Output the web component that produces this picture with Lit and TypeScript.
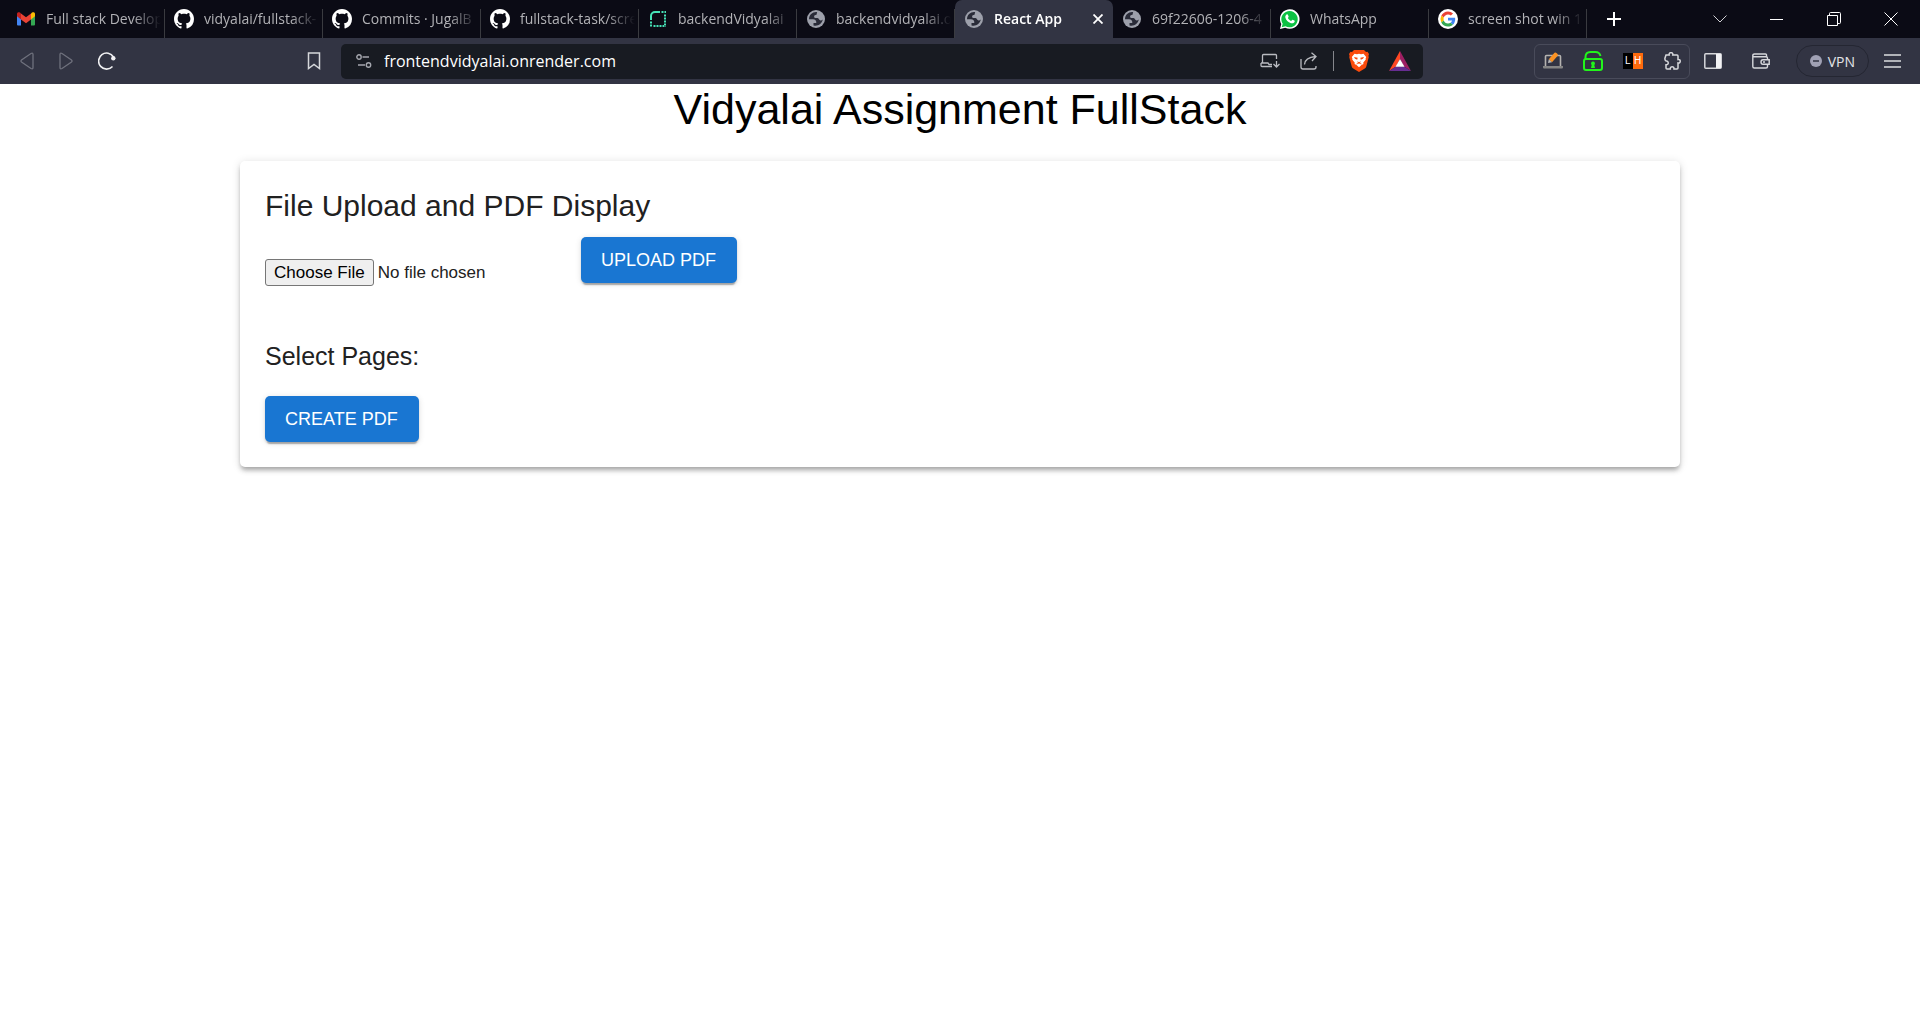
import { LitElement, html, css, svg } from "lit";
import { customElement, property } from "lit/decorators.js";

const icon = (w: number, h: number, body: unknown) =>
  html`<svg width=${w} height=${h} viewBox="0 0 ${w} ${h}" fill="none" aria-hidden="true">${body}</svg>`;

const gmail = icon(18, 14, svg`
  <path d="M0 2v10.5C0 13.300.6 13.500 1.200 13.500H4V6.500Z" fill="#4285f4"/>
  <path d="M18 2v10.500c0 .8-.6 1-1.200 1H14V6.500Z" fill="#34a853"/>
  <path d="M0 1.800C0 .2 1.700-.3 3 .6l1 .8v6L0 4.300Z" fill="#c5221f"/>
  <path d="M18 1.800C18 .2 16.300-.3 15 .6l-1 .8v6l4-3.100Z" fill="#fbbc04"/>
  <path d="M4 1.400 9 5.200l5-3.800v6l-5 3.800-5-3.800Z" fill="#ea4335"/>`);

const github = html`<svg width="20" height="20" viewBox="0 0 16 16" aria-hidden="true"><path fill="#fff" d="M8 0C3.58 0 0 3.58 0 8c0 3.54 2.29 6.53 5.47 7.59.4.07.55-.17.55-.38 0-.19-.01-.82-.01-1.49-2.01.37-2.53-.49-2.69-.94-.09-.23-.48-.94-.82-1.13-.28-.15-.68-.52-.01-.53.63-.01 1.08.58 1.23.82.72 1.21 1.87.87 2.33.66.07-.52.28-.87.51-1.07-1.78-.2-3.64-.89-3.64-3.95 0-.87.31-1.59.82-2.15-.08-.2-.36-1.02.08-2.12 0 0 .67-.21 2.2.82.64-.18 1.32-.27 2-.27s1.36.09 2 .27c1.53-1.04 2.2-.82 2.2-.82.44 1.1.16 1.92.08 2.12.51.56.82 1.27.82 2.15 0 3.07-1.87 3.75-3.65 3.95.29.25.54.73.54 1.48 0 1.07-.01 1.93-.01 2.2 0 .21.15.46.55.38A8.01 8.01 0 0 0 16 8c0-4.42-3.58-8-8-8Z"/></svg>`;

const render = icon(16, 16, svg`
  <path d="M1 9V5a4 4 0 0 1 4-4h5" stroke="#46e3b7" stroke-width="2"/>
  <path d="M11.500 1H16M15 3.500V16M1 10.500V16M3.500 15H14" stroke="#46e3b7" stroke-width="2" stroke-dasharray="2 1"/>`);

const globe = icon(18, 18, svg`
  <circle cx="9" cy="9" r="9" fill="#9da0ab"/>
  <path d="M2 9.300h3.900c2.400 0 3.500 1.200 3.400 3.700H6.500v2.400c4 1.300 8.500-1.400 9.300-5.800-.7.800-1.600 1-2.700.6-1.200-.4-1.300-2-2.700-2.200-1.500-.2-3.200.4-3.300-1.300-.1-1.500 1.400-1.300 2.200-1.900.8-.5.200-1.400.900-2.600C6 1.500 2 4.800 2 9.300Z" fill="#292b38"/>`);

const whatsapp = icon(20, 20, svg`
  <path d="M0 20 1.300 15A9.800 9.800 0 1 1 5.200 18.700Z" fill="#fff"/>
  <path d="m1.700 18.300 1-3.600A8.200 8.200 0 1 1 5.500 17.300Z" fill="#0dc143"/>
  <path d="M6.500 5.600c.5-.5 1.100-.4 1.400.2l.7 1.600c.2.500-.6 1.100-.7 1.500.7 1.400 1.800 2.400 3.200 3 .5-.1 1-1.200 1.500-1.100l1.700.8c.6.3.5.8.2 1.500-.6 1.200-2.200 1.500-3.500 1.100C8 13.200 6 11.100 5.400 8.700c-.3-1.200.2-2.300 1.100-3.100Z" fill="#fff"/>`);

const google = html`<svg width="20" height="20" viewBox="0 0 40 40" aria-hidden="true"><circle cx="20" cy="20" r="20" fill="#fff"/>
  <g transform="translate(5 5) scale(.625)">
  <path fill="#ea4335" d="M24 9.500c3.500 0 6.700 1.200 9.200 3.600l6.900-6.900C35.900 2.400 30.500 0 24 0 14.600 0 6.500 5.400 2.600 13.200l8 6.200C12.400 13.700 17.700 9.500 24 9.500Z"/>
  <path fill="#4285f4" d="M47 24.600c0-1.600-.2-3.100-.4-4.600H24v9h12.900c-.6 3-2.200 5.500-4.700 7.200l7.700 6C44.400 38 47 31.800 47 24.600Z"/>
  <path fill="#fbbc05" d="M10.500 28.600a14.500 14.500 0 0 1 0-9.200l-8-6.200a24 24 0 0 0 0 21.600Z"/>
  <path fill="#34a853" d="M24 48c6.500 0 11.900-2.100 15.900-5.800l-7.700-6c-2.200 1.400-4.900 2.300-8.200 2.300-6.300 0-11.600-4.200-13.500-9.900l-8 6.200C6.500 42.600 14.600 48 24 48Z"/></g></svg>`;

const plus = icon(14, 14, svg`<path d="M7 0v14M0 7h14" stroke="#fff" stroke-width="2"/>`);
const chevron = icon(14, 8, svg`<path d="m.5.5 6.500 6.500L13.500.5" stroke="#d0d0d4"/>`);
const minimize = icon(14, 14, svg`<path d="M0 7.500h13" stroke="#fff"/>`);
const restore = icon(14, 14, svg`<path d="M.5 3.500h10v10H.5zM2.500 3.500v-2q0-1 1-1h9q1 0 1 1v9q0 1-1 1h-2" stroke="#fff"/>`);
const closeWindow = icon(14, 14, svg`<path d="m.5.5 13 13m0-13-13 13" stroke="#fff"/>`);
const closeTab = icon(10, 10, svg`<path d="m.5.5 9 9m0-9-9 9" stroke="#fff" stroke-width="1.800"/>`);

const back = icon(14, 18, svg`<path d="M1.500 8q-1 1 0 2l9.500 6.500q2 1 2-1v-13q0-2-2-1Z" stroke="#6f717d" stroke-width="1.300"/>`);
const forward = icon(14, 18, svg`<path d="M12.500 8q1 1 0 2L3 16.500q-2 1-2-1v-13q0-2 2-1Z" stroke="#6f717d" stroke-width="1.300"/>`);
const reload = icon(18, 18, svg`<path d="M15.500 5A8 8 0 1 0 14.500 14.500" stroke="#f0f0f2" stroke-width="1.600"/><circle cx="15.300" cy="6.300" r="2.200" fill="#f0f0f2"/>`);
const bookmark = icon(14, 18, svg`<path d="M1.500 1h11v15.500L7 12.500l-5.500 4Z" stroke="#d6d7db" stroke-width="1.500"/>`);
const siteSettings = icon(16, 14, svg`<g stroke="#a5a7ae" stroke-width="1.400"><circle cx="3" cy="3" r="2.200"/><path d="M6.500 3H13M2 11h7"/><circle cx="12.500" cy="11" r="2.200"/></g>`);
const install = icon(20, 16, svg`<g stroke="#b9bbc0" stroke-width="1.300"><path d="M16.500 6V2.500q0-1-1-1h-12q-1 0-1 1V10M1 10h7l1 1.500h3M1 10v2.500q0 1 1 1h10M16.500 8v5.500M13.500 11l3 3 3-3"/></g>`);
const share = icon(18, 18, svg`<g stroke="#b9bbc0" stroke-width="1.300"><path d="M1 7v8q0 2 2 2h11q2 0 2-2v-1M4.500 12.500Q5 5.500 15.500 4.500M11.500.7l4.500 3.800-4 4.500"/></g>`);
const brave = icon(20, 22, svg`
  <path d="M5 0h10l2 2 1.500-.3L20 4l-.6 2 .4 1-2.500 9.500q-.4 1.300-1.500 2L10 22l-5.800-3.500q-1.100-.7-1.500-2L.2 7l.4-1L0 4l1.500-2.300L3 2Z" fill="#fb4b0c"/>
  <path d="m5.500 3.700 2.500.6 2-.5 2 .5 2.500-.6L17.200 7l-.6 1.500.2 1-2.600 3.300.3 1.300-2 .9L10 17.300 7.500 15l-2-.9.300-1.300-2.600-3.300.2-1L2.800 7Z" fill="#fff"/>
  <path d="m5 7 3.700.7-.5 2L6 8.800ZM15 7l-3.700.7.5 2L14 8.800ZM8.200 11.200 10 12.300l1.800-1.100-.6 1.500-1.200.7-1.200-.7Z" fill="#fb4b0c"/>
  <path d="m7.500 14 2.500-1 2.500 1" stroke="#fb4b0c" stroke-width=".8"/>`);
const bat = icon(22, 20, svg`
  <path d="M11 0 0 20l7-4.500 4-7.500Z" fill="#ff4724"/>
  <path d="M11 0v8l4 7.500 7 4.500Z" fill="#9e1f63"/>
  <path d="M0 20h22l-7-4.500H7Z" fill="#662d91"/>
  <path d="m11 8-4.500 7.700h9Z" fill="#fff"/>`);
const notes = icon(20, 18, svg`
  <path d="M2.500 14V4.500q0-1 1-1h13q1 0 1 1V14" stroke="#b5b3b0" stroke-width="1.600"/>
  <path d="M0 14h20v1.500q0 1-1 1H1q-1 0-1-1Z" fill="#858585"/>
  <path d="m5.800 7.200 5.700-6.400q1-.8 2 .2l1 1q1 1 0 2L9 10.200Z" fill="#fb9324"/><path d="m5 11 .8-3.800L9 10.200Z" fill="#b9b9b9"/>`);
const lock = icon(20, 20, svg`
  <path d="M2.500 8V6q0-5 5-5h5q4 0 5 4" stroke="#22f51b" stroke-width="2"/>
  <rect x="1" y="8" width="18" height="11" rx="2" stroke="#22f51b" stroke-width="2"/>
  <path d="M10 10.500a2 2 0 0 1 1.300 3.500l.7 3H8l.7-3A2 2 0 0 1 10 10.500Z" fill="#22f51b"/>`);
const puzzle = icon(18, 18, svg`<path d="M3 3h3.200C5.500-.2 10.500-.2 9.800 3H14q1 0 1 1v3.500c3-.7 3 4.200 0 3.500V16q0 1-1 1h-3c.3-3-4-3-3.700 0H4q-1 0-1-1v-3.200c3 .4 3-4.200 0-3.800Q1.500 8 2 6Z" stroke="#d6d7db" stroke-width="1.500"/>`);
const sidebar = icon(18, 16, svg`<rect x=".8" y=".8" width="16.400" height="14.400" rx="1" stroke="#d6d7db" stroke-width="1.500"/><path d="M12 1h5v14h-5Z" fill="#f2f2f4"/>`);
const wallet = icon(18, 16, svg`<g stroke="#d6d7db" stroke-width="1.400"><path d="M14.500 3.500V2q0-1-1-1h-11Q.8 1 .8 2.500v11q0 1.500 1.500 1.500H14q1.500 0 1.500-1.500V5q0-1.300-1.500-1.300H2.300Q.8 3.700.8 2.500"/><path d="M17.200 6.800H11q-2 0-2 2.200t2 2.200h6.200Z" fill="#323443"/></g><circle cx="12" cy="9" r="1" fill="#d6d7db"/>`);
const vpnDot = icon(12, 12, svg`<circle cx="6" cy="6" r="6" fill="#a0a1b4"/><path d="M3 6h6" stroke="#323443" stroke-width="1.500"/>`);
const menu = icon(18, 14, svg`<path d="M0 1h17M0 7h17M0 13h17" stroke="#dcdde0" stroke-width="1.500"/>`);

interface Tab { title: string; icon: unknown; active?: boolean }

const tabs: Tab[] = [
  { title: "Full stack Develop", icon: gmail },
  { title: "vidyalai/fullstack-", icon: github },
  { title: "Commits · JugalB", icon: github },
  { title: "fullstack-task/scre", icon: github },
  { title: "backendVidyalai", icon: render },
  { title: "backendvidyalai.o", icon: globe },
  { title: "React App", icon: globe, active: true },
  { title: "69f22606-1206-4", icon: globe },
  { title: "WhatsApp", icon: whatsapp },
  { title: "screen shot win 1", icon: google },
];

const reset = css`
  * { box-sizing: border-box; }
  svg { display: block; flex: none; }
  button, input { font: inherit; color: inherit; }
  button { border: 0; background: none; padding: 0; margin: 0; }
`;

@customElement("browser-tab")
class BrowserTab extends LitElement {
  @property({ attribute: false }) tab!: Tab;
  static styles = [reset, css`
    :host { display: block; flex: 0 1 158px; min-width: 0; height: 38px; color: #b2b2b6; }
    .tab { display: flex; align-items: center; height: 100%; padding: 0 4px 0 9px; background: linear-gradient(#3a3b40, #3a3b40) right bottom / 1px 29px no-repeat; }
    .active { background: #323443; border-radius: 7px 7px 0 0; color: #fff; font-weight: 600; padding-right: 10px; }
    .select { display: flex; align-items: center; gap: 10px; flex: 1; min-width: 0; height: 100%; text-align: left; }
    .icon { flex: none; width: 20px; display: flex; justify-content: center; }
    .title { flex: 1; min-width: 0; overflow: hidden; white-space: nowrap; line-height: 20px; -webkit-mask-image: linear-gradient(90deg, #000 calc(100% - 28px), transparent); }
  `];
  render() {
    const { title, icon: glyph, active } = this.tab;
    return html`<div class="tab ${active ? "active" : ""}">
      <button class="select"><span class="icon">${glyph}</span><span class="title">${title}</span></button>
      ${active ? html`<button aria-label="Close tab">${closeTab}</button>` : ""}
    </div>`;
  }
}

@customElement("browser-chrome")
class BrowserChrome extends LitElement {
  static styles = [reset, css`
    :host { display: block; font: 14px "Open Sans", "Noto Sans", sans-serif; }
    .strip { display: flex; align-items: center; height: 38px; background: #0b0b15; padding: 0 1px 0 7px; }
    .tabs { display: flex; flex: 0 1 1580px; min-width: 0; }
    .new { margin-left: 20px; }
    .window { display: flex; margin-left: auto; }
    .window button { width: 57px; height: 38px; display: grid; place-items: center; }
    .bar { display: flex; align-items: center; height: 46px; background: #323443; padding: 0 18px 0 20px; }
    .nav { display: flex; align-items: center; gap: 25px; flex: none; width: 287px; }
    .bookmark { flex: none; margin-right: 20px; }
    .address { display: flex; align-items: center; flex: 1; min-width: 0; height: 35px; border-radius: 5px; background: #181b22; padding: 0 12px 0 15px; }
    .url { flex: 1; min-width: 0; border: 0; outline: 0; background: none; padding: 0 0 0 12px; color: #fff; font-size: 16px; }
    .tools { display: flex; align-items: center; gap: 20px; }
    .rule { width: 1px; height: 20px; background: #85878c; margin: 0 -5px; }
    .extensions { display: flex; align-items: center; gap: 20px; flex: none; height: 35px; margin-left: 111px; padding: 0 8px; border: 1px solid #494b5a; border-radius: 6px; }
    .end { display: flex; align-items: center; flex: none; margin-left: 14px; }
    .end .wallet { margin: 0 26px 0 30px; }
    .vpn { display: flex; align-items: center; gap: 6px; height: 32px; padding: 0 13px; border: 1px solid #242632; border-radius: 16px; color: #e4e4e8; margin-right: 15px; }
    .lh { display: flex; width: 20px; height: 16px; color: #fff; font: 10px/16px "Liberation Sans", sans-serif; }
    .lh span { flex: 1; text-align: center; background: #000; }
    .lh span + span { background: #ff6a0d; }
  `];
  render() {
    return html`
      <nav class="strip" aria-label="Tabs">
        <div class="tabs">${tabs.map((t) => html`<browser-tab .tab=${t}></browser-tab>`)}</div>
        <button class="new" aria-label="New tab">${plus}</button>
        <div class="window">
          <button aria-label="Search tabs">${chevron}</button>
          <button aria-label="Minimize">${minimize}</button>
          <button aria-label="Restore">${restore}</button>
          <button aria-label="Close">${closeWindow}</button>
        </div>
      </nav>
      <div class="bar">
        <div class="nav">
          <button aria-label="Back">${back}</button>
          <button aria-label="Forward">${forward}</button>
          <button aria-label="Reload">${reload}</button>
        </div>
        <button class="bookmark" aria-label="Bookmark">${bookmark}</button>
        <div class="address">
          <button aria-label="Site settings">${siteSettings}</button>
          <input class="url" aria-label="Address" value="frontendvidyalai.onrender.com" spellcheck="false">
          <div class="tools">
            <button aria-label="Install">${install}</button>
            <button aria-label="Share">${share}</button>
            <span class="rule"></span>
            <button aria-label="Shields">${brave}</button>
            <button aria-label="Rewards">${bat}</button>
          </div>
        </div>
        <div class="extensions">
          <button aria-label="Notes">${notes}</button>
          <button aria-label="Unlock">${lock}</button>
          <button class="lh"><span>L</span><span>H</span></button>
          <button aria-label="Extensions">${puzzle}</button>
        </div>
        <div class="end">
          <button aria-label="Sidebar">${sidebar}</button>
          <button class="wallet" aria-label="Wallet">${wallet}</button>
          <button class="vpn">${vpnDot}VPN</button>
          <button aria-label="Menu">${menu}</button>
        </div>
      </div>`;
  }
}

@customElement("pdf-tool")
class PdfTool extends LitElement {
  static styles = [reset, css`
    :host { display: block; font-family: "Liberation Sans", Arial, sans-serif; color: #212121; }
    h1, h2, h3 { margin: 0; font-weight: 400; }
    h1 { font-size: 43px; line-height: 50px; text-align: center; color: #000; }
    .card { max-width: 1440px; margin: 27px auto 0; padding: 25px; border-radius: 5px; background: #fff;
      box-shadow: 0 4px 4px -2px rgba(0,0,0,.2), 0 4px 5px rgba(0,0,0,.14), 0 1px 10px rgba(0,0,0,.12); }
    h2 { font-size: 30px; line-height: 40px; margin-bottom: 11px; }
    .upload { display: flex; align-items: flex-start; margin-bottom: 50px; }
    .file { flex: none; width: 316px; margin-top: 22px; font-size: 17px; line-height: 20px; }
    .file::file-selector-button { height: 27px; padding: 0 8px; margin-right: 4px; border: 1px solid #767676; border-radius: 3px; background: #efefef; color: #000; font: inherit; }
    h3 { font-size: 25px; line-height: 40px; margin-bottom: 20px; }
    .primary { height: 46px; padding: 0 21px 0 20px; border-radius: 5px; background: #1976d2; color: #fff; font-size: 18px; line-height: 30px;
      box-shadow: 0 4px 1px -2px rgba(0,0,0,.2), 0 2px 2px rgba(0,0,0,.14), 0 1px 6px rgba(0,0,0,.12); }
  `];
  render() {
    return html`
      <h1>Vidyalai Assignment FullStack</h1>
      <main class="card">
        <h2>File Upload and PDF Display</h2>
        <div class="upload">
          <input class="file" type="file" accept="application/pdf" aria-label="PDF file">
          <button class="primary">UPLOAD PDF</button>
        </div>
        <h3>Select Pages:</h3>
        <button class="primary">CREATE PDF</button>
      </main>`;
  }
}

@customElement("app-root")
class AppRoot extends LitElement {
  static styles = css`:host { display: block; min-height: 100vh; background: #fff; }`;
  render() {
    return html`<browser-chrome></browser-chrome><pdf-tool></pdf-tool>`;
  }
}
